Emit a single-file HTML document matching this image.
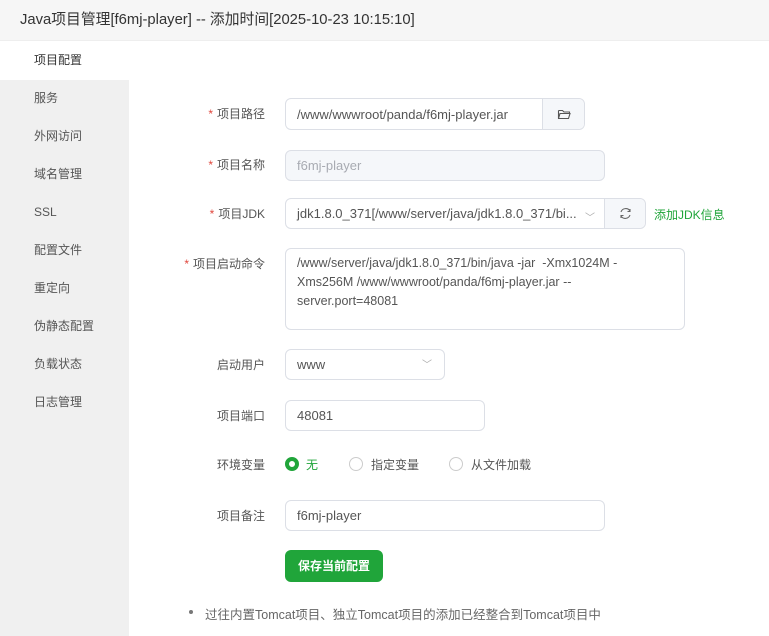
<!DOCTYPE html>
<html><head><meta charset="utf-8"><style>
*{margin:0;padding:0;box-sizing:border-box}
body{width:769px;height:636px;overflow:hidden;background:#fff;font-family:"Liberation Sans","Noto Sans CJK SC",sans-serif;color:#555;position:relative}
.a{position:absolute}
.title{left:0;top:0;width:769px;height:41px;background:#f6f6f6;font-size:14.8px;color:#333;line-height:40px;padding-left:20px;border-bottom:1px solid #eee}
.side{left:0;top:80px;width:129px;height:556px;background:#f0f0f0}
.nav{left:34px;font-size:12px;color:#555;line-height:16px}
.lbl{font-size:12px;color:#555;text-align:right;width:120px;left:145px;line-height:16px}
.lbl b{color:#e0463c;font-weight:normal;margin-right:4px}
.box{border:1px solid #dcdfe6;border-radius:6px;font-size:13px;color:#555;padding-left:11px;display:flex;align-items:center;background:#fff}
.rad{width:14px;height:14px;border:1px solid #ccc;border-radius:50%}
</style></head><body>
<div class="a title">Java项目管理[f6mj-player] -- 添加时间[2025-10-23 10:15:10]</div>
<div class="a side"></div>
<div class="a nav" style="top:52px;color:#333">项目配置</div>
<div class="a nav" style="top:90px">服务</div>
<div class="a nav" style="top:128px">外网访问</div>
<div class="a nav" style="top:166px">域名管理</div>
<div class="a nav" style="top:204px">SSL</div>
<div class="a nav" style="top:242px">配置文件</div>
<div class="a nav" style="top:280px">重定向</div>
<div class="a nav" style="top:318px">伪静态配置</div>
<div class="a nav" style="top:356px">负载状态</div>
<div class="a nav" style="top:394px">日志管理</div>

<div class="a lbl" style="top:106px"><b>*</b>项目路径</div>
<div class="a box" style="left:285px;top:98px;width:300px;height:32px">/www/wwwroot/panda/f6mj-player.jar</div>
<div class="a" style="left:542px;top:99px;width:42px;height:30px;background:#f5f7fa;border-left:1px solid #dcdfe6;border-radius:0 6px 6px 0"><svg width="42" height="30"><path d="M15.5 11.5h4l1.5 1.5h5.5v1.5M15.5 11.5v8h10l1.5-5h-10l-1.5 5" fill="none" stroke="#555" stroke-width="1.1"/></svg></div>

<div class="a lbl" style="top:157px"><b>*</b>项目名称</div>
<div class="a box" style="left:285px;top:150px;width:320px;height:31px;background:#f5f7fa;color:#a8abb2">f6mj-player</div>

<div class="a lbl" style="top:206px"><b>*</b>项目JDK</div>
<div class="a box" style="left:285px;top:198px;width:361px;height:31px">jdk1.8.0_371[/www/server/java/jdk1.8.0_371/bi...</div>
<div class="a" style="left:585px;top:209px;font-size:10px;color:#aaa">﹀</div>
<div class="a" style="left:604px;top:199px;width:41px;height:29px;background:#f5f7fa;border-left:1px solid #dcdfe6;border-radius:0 6px 6px 0"><svg width="41" height="29"><path d="M16 13a5 5 0 0 1 9-1M25 16a5 5 0 0 1-9 1M25 10v2.5h-2.5M16 19v-2.5h2.5" fill="none" stroke="#666" stroke-width="1.1"/></svg></div>
<div class="a" style="left:654px;top:206px;font-size:12px;color:#20a53a">添加JDK信息</div>

<div class="a lbl" style="top:256px"><b>*</b>项目启动命令</div>
<div class="a box" style="left:285px;top:248px;width:400px;height:82px;align-items:flex-start;padding-top:5px;line-height:19px;font-size:12.5px">/www/server/java/jdk1.8.0_371/bin/java -jar&nbsp; -Xmx1024M -<br>Xms256M /www/wwwroot/panda/f6mj-player.jar --<br>server.port=48081</div>

<div class="a lbl" style="top:357px">启动用户</div>
<div class="a box" style="left:285px;top:349px;width:160px;height:31px">www</div>
<div class="a" style="left:422px;top:356px;font-size:10px;color:#aaa">﹀</div>

<div class="a lbl" style="top:408px">项目端口</div>
<div class="a box" style="left:285px;top:400px;width:200px;height:31px">48081</div>

<div class="a lbl" style="top:457px">环境变量</div>
<div class="a rad" style="left:285px;top:457px;border:4px solid #20a53a"></div>
<div class="a" style="left:306px;top:456px;font-size:12px;color:#20a53a">无</div>
<div class="a rad" style="left:349px;top:457px"></div>
<div class="a" style="left:371px;top:456px;font-size:12px">指定变量</div>
<div class="a rad" style="left:449px;top:457px"></div>
<div class="a" style="left:471px;top:456px;font-size:12px">从文件加载</div>

<div class="a lbl" style="top:508px">项目备注</div>
<div class="a box" style="left:285px;top:500px;width:320px;height:31px">f6mj-player</div>

<div class="a" style="left:285px;top:550px;width:98px;height:32px;background:#20a53a;border-radius:6px;color:#fff;font-size:12px;font-weight:bold;text-align:center;line-height:32px">保存当前配置</div>

<div class="a" style="left:189px;top:610px;width:4px;height:4px;border-radius:50%;background:#777"></div>
<div class="a" style="left:205px;top:604px;font-size:12.5px;color:#666">过往内置Tomcat项目、独立Tomcat项目的添加已经整合到Tomcat项目中</div>
</body></html>
